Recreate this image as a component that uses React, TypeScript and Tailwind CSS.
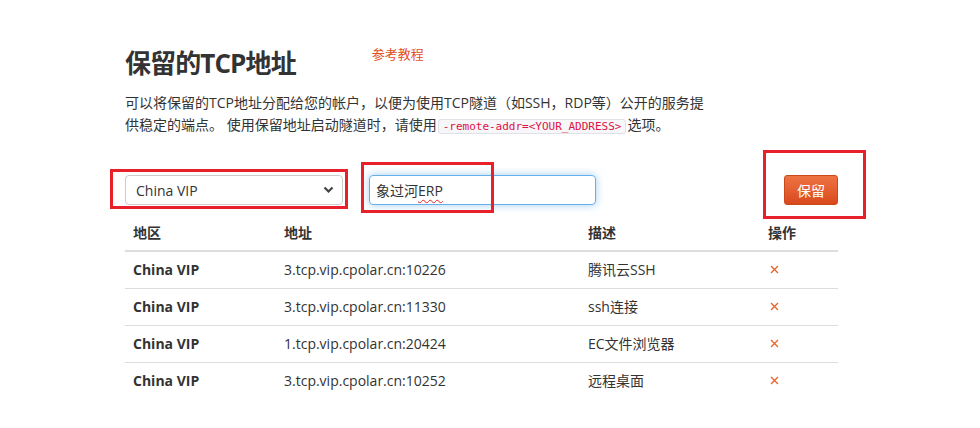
import React from "react";

const rows = [
  { region: "China VIP", addr: "3.tcp.vip.cpolar.cn:10226", desc: "腾讯云SSH" },
  { region: "China VIP", addr: "3.tcp.vip.cpolar.cn:11330", desc: "ssh连接" },
  { region: "China VIP", addr: "1.tcp.vip.cpolar.cn:20424", desc: "EC文件浏览器" },
  { region: "China VIP", addr: "3.tcp.vip.cpolar.cn:10252", desc: "远程桌面" },
];

const font = { fontFamily: '"Open Sans", "Noto Sans CJK SC", sans-serif' };

export default function App() {
  return (
    <div className="relative w-[980px] h-[428px] bg-white text-[#333] overflow-hidden" style={font}>
      <div className="pl-[125px] pt-[46px] w-[838px]">
        <div className="flex items-start">
          <h2 className="text-[26px] font-bold leading-[34px] tracking-[-0.9px]">保留的TCP地址</h2>
          <a className="ml-[76px] -mt-[2px] text-[13px] text-[#e0501e] leading-[20px]">参考教程</a>
        </div>
        <p className="mt-[12px] text-[14px] leading-[22px] w-[590px]">
          可以将保留的TCP地址分配给您的帐户，以便为使用TCP隧道（如SSH，RDP等）公开的服务提供稳定的端点。 使用保留地址启动隧道时，请使用
          <code
            className="mx-[1px] px-[4px] py-0 rounded-[3px] bg-[#f7f7f9] border border-[#e1e1e8] text-[#dd1144] text-[11px] leading-[18px]"
            style={{ fontFamily: '"DejaVu Sans Mono", monospace' }}
          >
            -remote-addr=&lt;YOUR_ADDRESS&gt;
          </code>
          选项。
        </p>
        <div className="mt-[39px] flex items-center h-[30px]">
          <div className="w-[218px] h-[30px] border border-[#ccc] rounded-[4px] flex items-center justify-between pl-[10px] pr-[8px] text-[14px]">
            <span>China VIP</span>
            <svg width="11" height="8" viewBox="0 0 11 8">
              <path d="M1.5 1.5 L5.5 5.5 L9.5 1.5" fill="none" stroke="#444" strokeWidth="2.2" />
            </svg>
          </div>
          <div className="ml-[26px] w-[227px] h-[30px] border border-[#66afe9] rounded-[4px] flex items-center px-[6px] text-[14px] shadow-[0_0_8px_rgba(102,175,233,0.6)]">
            <span>象过河</span>
            <span className="underline decoration-wavy decoration-[#e02020] underline-offset-[3px] decoration-1">ERP</span>
          </div>
          <div className="flex-1" />
          <button className="w-[54px] h-[30px] rounded-[3px] border border-[#c8491a] bg-gradient-to-b from-[#ee7343] to-[#d9491b] text-white text-[14px]">
            保留
          </button>
        </div>
        <table className="mt-[9px] w-[713px] text-[14px] border-collapse">
          <thead>
            <tr className="h-[37px]">
              <th className="text-left font-bold pl-[8px] w-[151px]">地区</th>
              <th className="text-left font-bold pl-[8px] w-[304px]">地址</th>
              <th className="text-left font-bold pl-[8px] w-[180px]">描述</th>
              <th className="text-left font-bold pl-[8px]">操作</th>
            </tr>
          </thead>
          <tbody>
            {rows.map((r, i) => (
              <tr key={i} className={"h-[37px] border-[#ddd] " + (i === 0 ? "border-t-2" : "border-t")}>
                <td className="pl-[8px] font-bold">{r.region}</td>
                <td className="pl-[8px]">{r.addr}</td>
                <td className="pl-[8px]">{r.desc}</td>
                <td className="pl-[10px]">
                  <svg width="9" height="9" viewBox="0 0 9 9" className="block">
                    <path d="M1 1 L8 8 M8 1 L1 8" stroke="#e8652c" strokeWidth="1.4" fill="none" />
                  </svg>
                </td>
              </tr>
            ))}
          </tbody>
        </table>
      </div>
      {/* annotation boxes */}
      <div className="absolute left-[110px] top-[169px] w-[238px] h-[40px] border-[3px] border-[#e8202a]" />
      <div className="absolute left-[361px] top-[162px] w-[133px] h-[51px] border-[3px] border-[#e8202a]" />
      <div className="absolute left-[763px] top-[150px] w-[103px] h-[69px] border-[3px] border-[#e8202a]" />
    </div>
  );
}
